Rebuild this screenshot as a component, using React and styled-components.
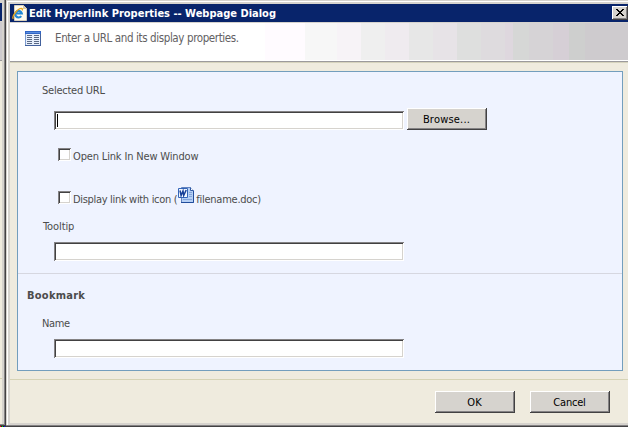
import React from 'react';
import styled, { createGlobalStyle } from 'styled-components';

const Global = createGlobalStyle`
  *, *::before, *::after { box-sizing: border-box; }
  html, body { margin: 0; padding: 0; overflow: hidden; }
  body { font-family: "DejaVu Sans Condensed", "DejaVu Sans", sans-serif; font-stretch: condensed; font-size: 11px; color: #4c4c4c; }
`;

const Screen = styled.div`
  width: 628px;
  height: 427px;
  display: flex;
  background: #efebde;
  overflow: hidden;
`;

const ParentEdge = styled.div`
  width: 6px;
  height: 427px;
  flex: none;
  display: flex;
  flex-direction: column;
  border-right: 1px solid #424142;
  box-shadow: inset -1px 0 #848284, inset -3px 0 #d6d3ce;
  background: linear-gradient(#d6d3ce 0 3px, #08246b 3px 21px, #d6d3ce 21px 22px, #cecbce 22px 60px, #9c9a9c 60px 61px, #efebde 61px 378px, #d6d3b5 378px 379px, #efebde 379px);
`;

const ParentCorner = styled.div`
  margin-top: auto;
  height: 3px;
  background: linear-gradient(#848284 0 1px, #424142 1px 2px, transparent 2px),
    linear-gradient(90deg, #f00 0 1px, #222 1px 2px, #0c0 2px 3px, #222 3px 4px, #00f 4px 5px);
`;

const Dialog = styled.section`
  flex: 1;
  height: 427px;
  display: flex;
  flex-direction: column;
  padding: 4px 0 4px 4px;
  background: #efebde;
  box-shadow: inset 0 -1px #424142, inset 0 -2px #848284, inset 1px 1px #d6d3ce,
    inset 2px 2px #fff, inset 4px 4px #d6d3ce, inset 0 -4px #d6d3ce;
`;

const TitleBar = styled.header`
  height: 18px;
  flex: none;
  display: flex;
  align-items: center;
  padding-left: 2px;
  background: #08246b;
  color: #fff;
`;

const Title = styled.h1`
  margin: 1px auto 0 2px;
  font-size: 11px;
  line-height: 18px;
  font-weight: bold;
  white-space: nowrap;
`;

const CloseButton = styled.button`
  width: 16px;
  height: 14px;
  padding: 0 0 1px;
  display: flex;
  align-items: center;
  justify-content: center;
  border: 0;
  background: #d6d3ce;
  box-shadow: inset -1px -1px #424142, inset 1px 1px #fff, inset -2px -2px #848284;
`;

const Banner = styled.div`
  height: 41px;
  flex: none;
  display: flex;
  align-items: flex-start;
  padding: 8px 0 0 15px;
  border-top: 1px solid #d6d3ce;
  border-bottom: 1px solid #d6d3bd;
  box-shadow: inset 0 -1px #9c9a9c, inset 0 -2px #fff;
  background: linear-gradient(90deg, #fff 0 255px, #fffbff 255px 295px, #f7f7f7 295px 327px,
    #f7f3f7 327px 351px, #efefef 351px 375px, #efebef 375px 399px, #e7e7e7 399px 423px,
    #e7e3e7 423px 447px, #dedfde 447px 471px, #dedbde 471px 495px, #ded7de 495px 503px,
    #d6d7d6 503px 519px, #d6d3d6 519px 543px, #d6cfd6 543px 559px, #cecfce 559px 575px, #cecbce 575px);
`;

const BannerText = styled.p`
  margin: -1px 0 0 14px;
  font-size: 11.5px;
  line-height: 17px;
  color: #636163;
  white-space: nowrap;
  letter-spacing: ${(p) => p.$track}px;
`;

const Panel = styled.main`
  width: 606px;
  height: 300px;
  margin: 8px 0 0 7px;
  flex: none;
  border: 1px solid #739ebd;
  background: #eff3ff;
`;

const LinkSection = styled.div`
  height: 202px;
  padding: 12px 0 0 24px;
  border-bottom: 1px solid #d6d7e0;
`;

const BookmarkSection = styled.div`
  padding: 15px 0 0 9px;
`;

const SectionTitle = styled.h2`
  margin: 0;
  font-size: 11px;
  line-height: 14px;
  font-weight: bold;
  letter-spacing: ${(p) => p.$track}px;
`;

const Label = styled.div`
  height: 14px;
  line-height: 14px;
  margin-top: ${(p) => p.$top || 0}px;
  margin-left: ${(p) => p.$left || 0}px;
  white-space: nowrap;
  letter-spacing: ${(p) => p.$track || 0}px;
`;

const FieldRow = styled.div`
  display: flex;
  align-items: flex-start;
  gap: 3px;
  height: 22px;
  margin-top: ${(p) => p.$top}px;
  margin-left: ${(p) => p.$left || 12}px;
`;

const Field = styled.div`
  width: 350px;
  height: 19px;
  margin-top: 3px;
  padding: 3px 0 0 3px;
  background: #fff;
  box-shadow: inset 1px 1px #848284, inset -1px -1px #fff, inset 2px 2px #424142, inset -2px -2px #d6d3ce;
`;

const Caret = styled.div`
  width: 1px;
  height: 13px;
  background: #000;
`;

const Button = styled.button`
  width: 80px;
  height: 22px;
  flex: none;
  padding: 1px 1px 0 0;
  border: 0;
  background: #d6d3ce;
  box-shadow: inset -1px -1px #424142, inset 1px 1px #fff, inset -2px -2px #848284;
  color: #000;
  font: inherit;
  line-height: 21px;
  letter-spacing: ${(p) => p.$track || 0}px;
`;

const CheckRow = styled.div`
  display: flex;
  height: 18px;
  margin-top: ${(p) => p.$top}px;
  margin-left: 16px;
`;

const CheckBox = styled.div`
  width: 13px;
  height: 13px;
  margin: 3px 2px 0 0;
  background: #fff;
  box-shadow: inset 1px 1px #848284, inset -1px -1px #fff, inset 2px 2px #424142, inset -2px -2px #d6d3ce;
`;

const CheckText = styled.span`
  line-height: 14px;
  margin-top: 5px;
  white-space: nowrap;
  letter-spacing: ${(p) => p.$track}px;
`;

const IconSlot = styled.span`
  width: 16px;
  height: 16px;
  margin: -1px 2px 0 1px;
`;

const Footer = styled.footer`
  flex: 1;
  display: flex;
  justify-content: flex-end;
  gap: 15px;
  margin-top: 8px;
  padding: 11px 18px 0 0;
  border-top: 1px solid #d6d3b5;
`;

const Icon = styled.svg`
  display: block;
  flex: none;
`;

function BrowserIcon() {
  return (
    <Icon width="15" height="16" viewBox="0 0 15 16">
      <path d="M2.5.5h9l3 3v12h-12z" fill="#fffbee" stroke="#d8d0bc" />
      <path d="M11 0v4h4z" fill="#d4c7a7" />
      <path d="M9.2 11.2a3.3 3.3 0 1 1 .6-2.7H3.6" fill="none" stroke="#2389d5" strokeWidth="2.2" />
      <path d="M1.4 13.7C-.8 11.6 5.8 3.3 9.5 3.4c1.2.1 1.1 1.1.5 2" fill="none" stroke="#e8a51d" strokeWidth="1.4" />
    </Icon>
  );
}

function ListIcon() {
  return (
    <Icon width="16" height="15" viewBox="0 0 16 15" shapeRendering="crispEdges">
      <path d="M0 0h16v15H0z" fill="#7b9ace" />
      <path d="M0 0h16v3H0z" fill="#3165c6" />
      <path d="M1 1h14v1H1z" fill="#5a8ede" />
      <path d="M1 3h14v11H1z" fill="#e7effb" />
      <path d="M2 4.5h5M9 4.5h5M2 6.5h5M9 6.5h5M2 8.5h5M9 8.5h5M2 10.5h5M9 10.5h5M2 12.5h5M9 12.5h5" stroke="#5a6984" />
      <path d="M15.5 3v12M0 14.5h16" stroke="#42619c" />
    </Icon>
  );
}

function WordIcon() {
  return (
    <Icon width="16" height="16" viewBox="0 0 16 16">
      <path d="M3.5.5h9l3 3v12h-12z" fill="#b5cff5" stroke="#6384c0" />
      <path d="M12.5.5v3h3" fill="#fff" stroke="#315aa5" />
      <path d="M11 5.5h3M11 7.5h3M11 9.5h3M5 12.5h9" stroke="#84a5db" />
      <path d="M15.5 4v11.5H3" fill="none" stroke="#214d9c" />
      <path d="M.5 1.5h9v9h-9z" fill="#f2f7ff" stroke="#3465b8" />
      <path d="M2 3.5l1.1 5L5 4l.7 4.5L8.2 3" fill="none" stroke="#163f98" strokeWidth="1.5" />
    </Icon>
  );
}

function CloseGlyph() {
  return (
    <Icon width="8" height="7" viewBox="0 0 8 7" shapeRendering="crispEdges">
      <path
        d="M0 0h2v1h1v1h2V1h1V0h2v1H7v1H6v1H5v1h1v1h1v1h1v1H6V6H5V5H3v1H2v1H0V6h1V5h1V4h1V3H2V2H1V1H0z"
        fill="#000"
      />
    </Icon>
  );
}

export default function App() {
  return (
    <>
      <Global />
      <Screen>
        <ParentEdge><ParentCorner /></ParentEdge>
        <Dialog>
          <TitleBar>
            <BrowserIcon />
            <Title>Edit Hyperlink Properties -- Webpage Dialog</Title>
            <CloseButton aria-label="Close"><CloseGlyph /></CloseButton>
          </TitleBar>
          <Banner>
            <ListIcon />
            <BannerText $track={-0.39}>Enter a URL and its display properties.</BannerText>
          </Banner>
          <Panel>
            <LinkSection>
              <Label $track={-0.25}>Selected URL</Label>
              <FieldRow $top={10}>
                <Field><Caret /></Field>
                <Button $track={0.2}>Browse...</Button>
              </FieldRow>
              <CheckRow $top={15}>
                <CheckBox />
                <CheckText $track={-0.16}>Open Link In New Window</CheckText>
              </CheckRow>
              <CheckRow $top={25}>
                <CheckBox />
                <CheckText $track={-0.32}>Display link with icon (</CheckText>
                <IconSlot><WordIcon /></IconSlot>
                <CheckText $track={-0.25}>filename.doc)</CheckText>
              </CheckRow>
              <Label $top={14} $left={1} $track={-0.1}>Tooltip</Label>
              <FieldRow $top={5}><Field /></FieldRow>
            </LinkSection>
            <BookmarkSection>
              <SectionTitle $track={0.25}>Bookmark</SectionTitle>
              <Label $top={14} $left={15} $track={-0.4}>Name</Label>
              <FieldRow $top={5} $left={27}><Field /></FieldRow>
            </BookmarkSection>
          </Panel>
          <Footer>
            <Button>OK</Button>
            <Button $track={-0.2}>Cancel</Button>
          </Footer>
        </Dialog>
      </Screen>
    </>
  );
}
